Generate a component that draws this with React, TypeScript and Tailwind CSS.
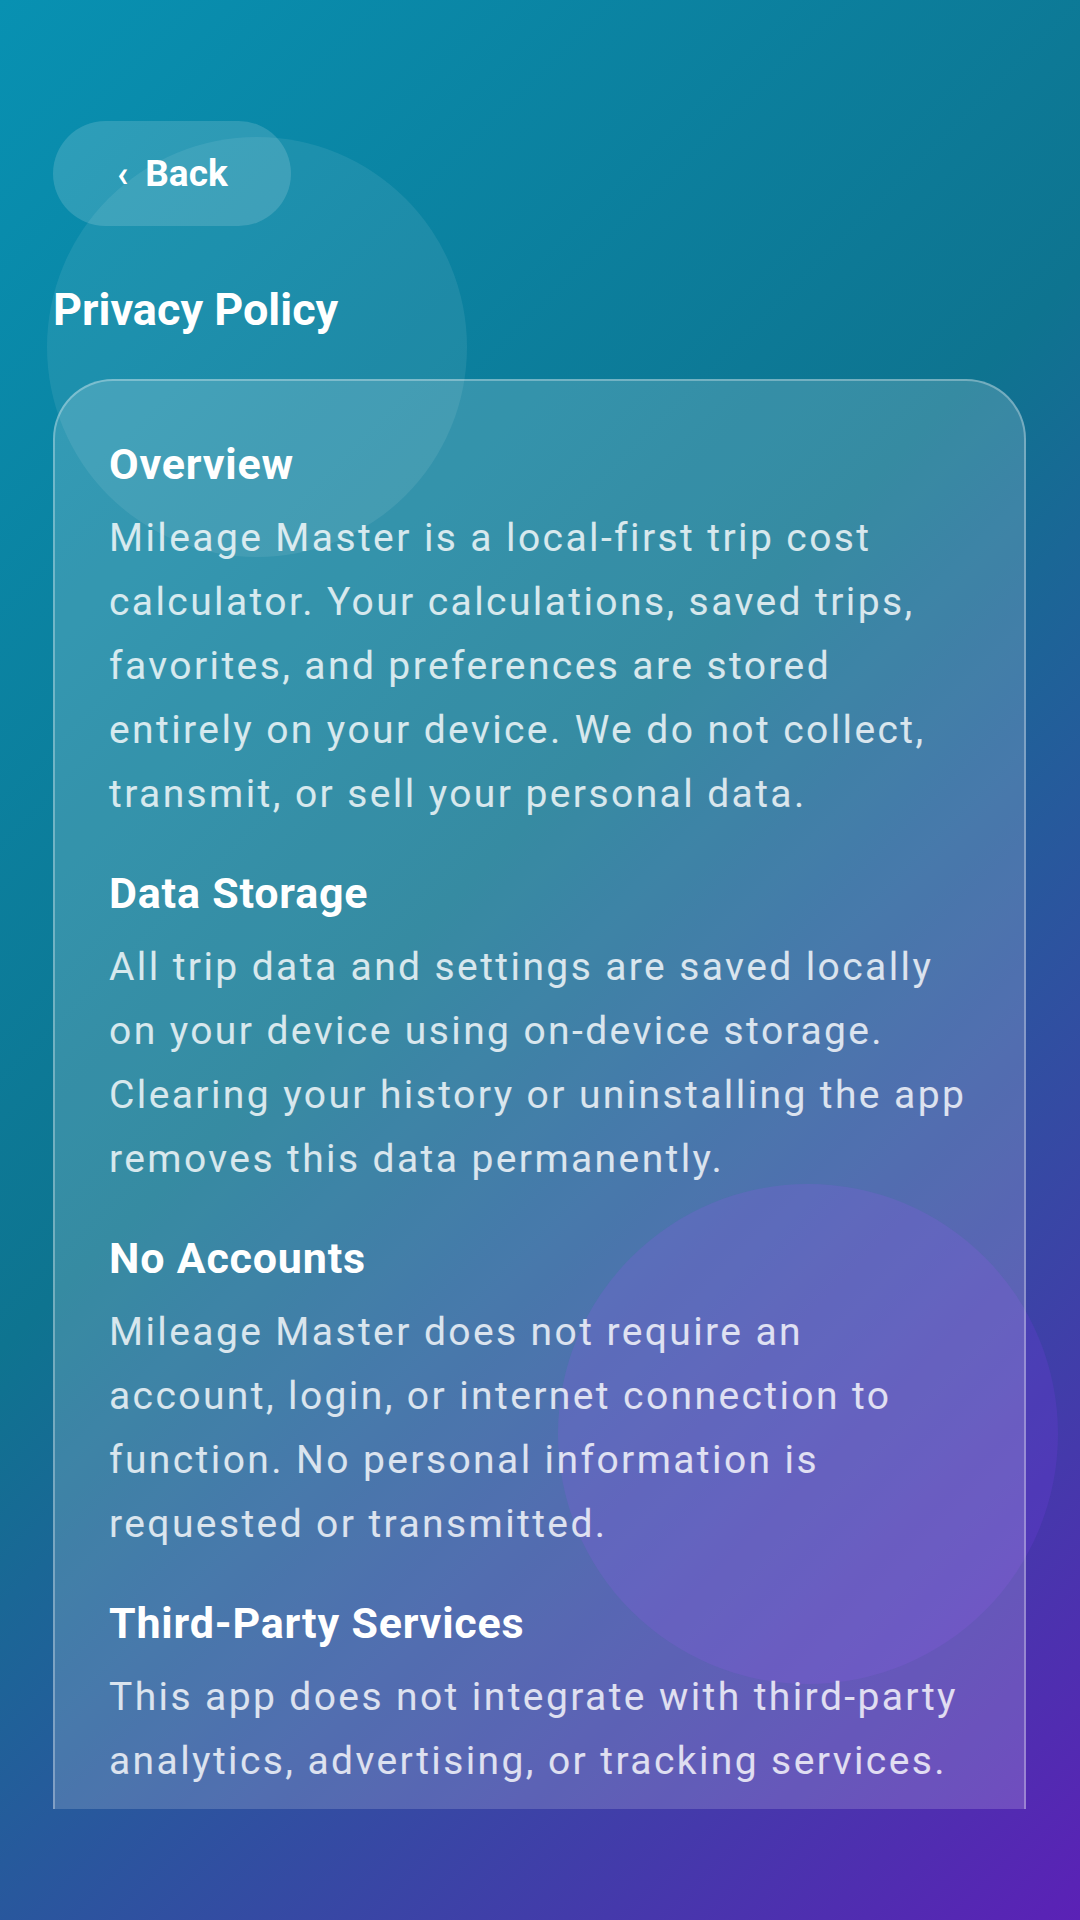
import React from "react";

const sections = [
  {
    title: "Overview",
    body: "Mileage Master is a local-first trip cost calculator. Your calculations, saved trips, favorites, and preferences are stored entirely on your device. We do not collect, transmit, or sell your personal data.",
  },
  {
    title: "Data Storage",
    body: "All trip data and settings are saved locally on your device using on-device storage. Clearing your history or uninstalling the app removes this data permanently.",
  },
  {
    title: "No Accounts",
    body: "Mileage Master does not require an account, login, or internet connection to function. No personal information is requested or transmitted.",
  },
  {
    title: "Third-Party Services",
    body: "This app does not integrate with third-party analytics, advertising, or tracking services.",
  },
];

export default function App() {
  return (
    <div className="relative w-[1080px] h-[1920px] overflow-hidden bg-[linear-gradient(135deg,#0891b2_0%,#0e7490_45%,#5b21b6_100%)] font-['Roboto',sans-serif]">
      <div className="absolute left-[47px] top-[137px] w-[420px] h-[420px] rounded-full bg-white/[0.08]" />
      <div className="absolute left-[558px] top-[1184px] w-[500px] h-[500px] rounded-full bg-[rgba(112,60,220,0.25)]" />

      <div className="relative h-[1809px] overflow-hidden pl-[53px] pr-[54px] pt-[121px]">
        <button className="flex h-[105px] w-[238px] items-center gap-[17px] rounded-full bg-white/15 pl-[64px] text-white">
          <span className="text-[36px] font-bold leading-none">‹</span>
          <span className="text-[37px] font-bold leading-none">Back</span>
        </button>

        <h1 className="mt-[56px] text-[45px] font-bold leading-[56px] text-white">
          Privacy Policy
        </h1>

        <div className="mt-[41px] rounded-[60px] border-2 border-white/30 bg-white/[0.17] px-[54px] pt-[51px] pb-[220px]">
          <div className="flex flex-col gap-[35px]">
            {sections.map((s) => (
              <div key={s.title}>
                <h2 className="text-[43px] font-bold leading-[64px] tracking-[0.8px] text-white">
                  {s.title}
                </h2>
                <p className="mt-[10px] text-[39px] leading-[64px] tracking-[2.4px] text-white/80">
                  {s.body}
                </p>
              </div>
            ))}
          </div>
        </div>
      </div>
    </div>
  );
}
